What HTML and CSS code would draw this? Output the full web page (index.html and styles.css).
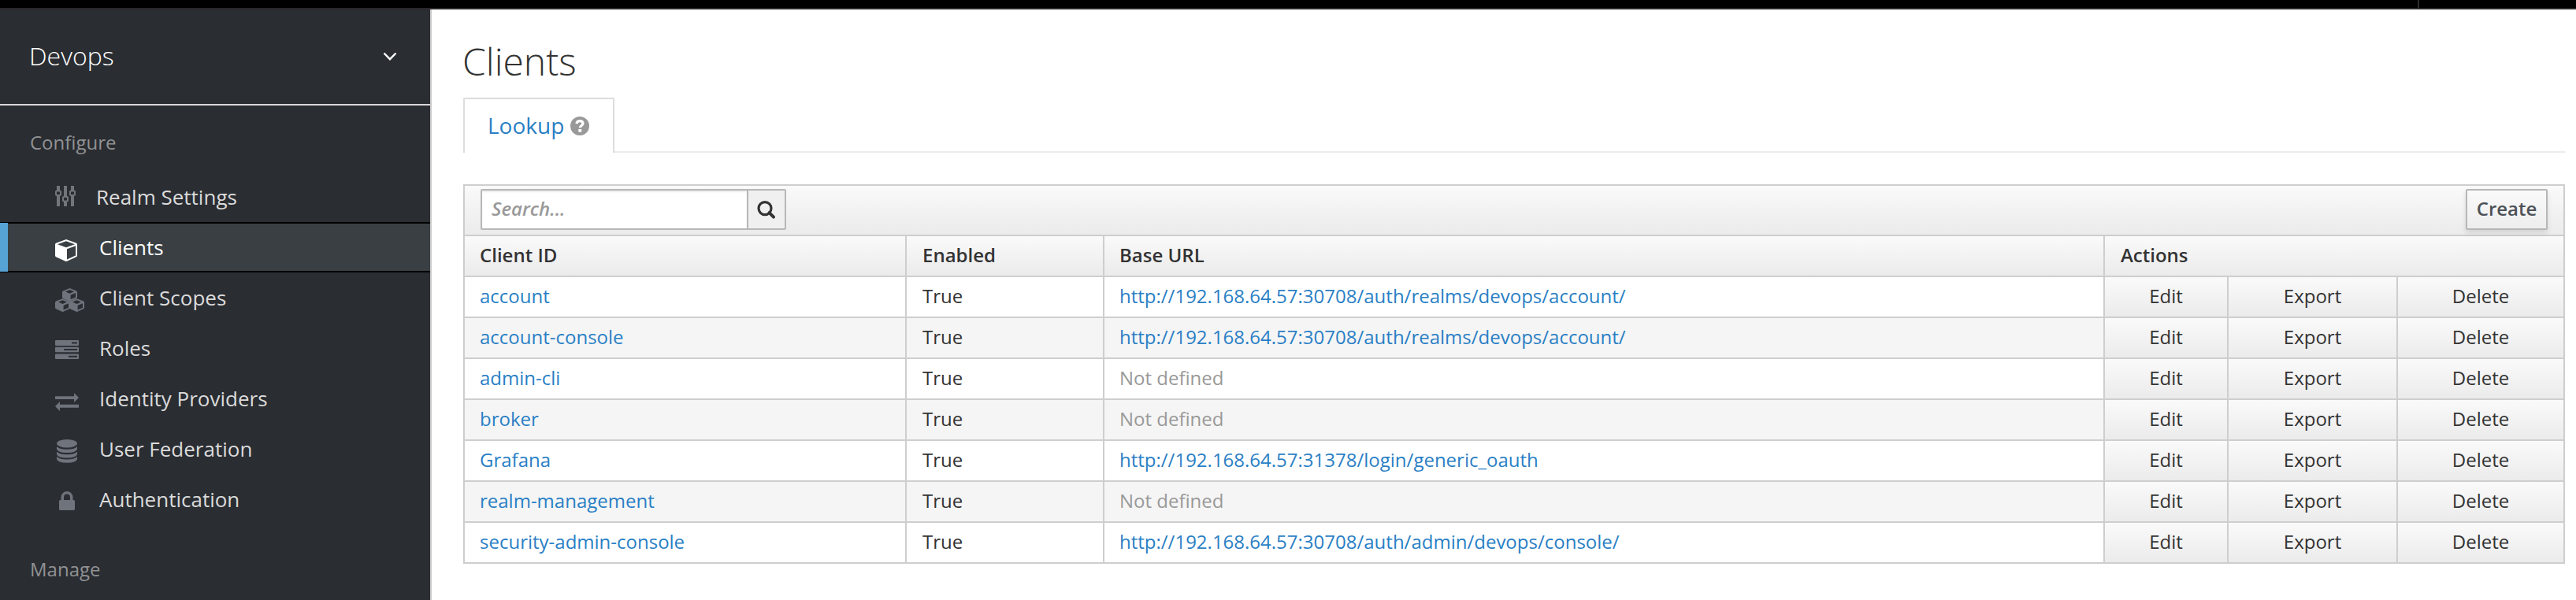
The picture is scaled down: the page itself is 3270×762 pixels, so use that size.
FILE: index.html
```
<!DOCTYPE html>
<html lang="en">
<head>
<meta charset="utf-8">
<title>Clients</title>
<link rel="stylesheet" href="styles.css">
</head>
<body>
<div class="topbar"><span class="topbar-sep"></span></div>
<div class="shell">
  <nav class="sidebar">
    <div class="realm"><span>Devops</span>
      <svg width="18" height="12" viewBox="0 0 18 12"><path d="M1.500 1.500 9 9.200l7.500-7.700" fill="none" stroke="#fff" stroke-width="2.400"/></svg>
    </div>
    <h2 class="group">Configure</h2>
    <ul class="menu">
      <li class="item first"><span class="ico"><svg width="26" height="26" viewBox="0 0 26 26"><g fill="#72767b"><path d="M2 0h4v6H2zM2 12h4v14H2zM11 0h4v14h-4zM11 20h4v6h-4zM20 0h4v6h-4zM20 12h4v14h-4z"/></g><g fill="none" stroke="#72767b" stroke-width="2"><rect x="1" y="6.500" width="6" height="5.500" rx="1"/><rect x="10" y="14" width="6" height="5.500" rx="1"/><rect x="19" y="6.500" width="6" height="5.500" rx="1"/></g></svg></span><a>Realm Settings</a></li>
      <li class="item active"><span class="ico low"><svg width="28" height="28" viewBox="0 0 28 28"><path fill="#fff" fill-rule="evenodd" d="M14 0 27 4.800Q28 5.300 28 6.500V20.500Q28 21.700 27 22.300L15 27.800Q14 28.200 13 27.800L1 22.300Q0 21.700 0 20.500V6.500Q0 5.300 1 4.800ZM14 2.200 3 6.200 14 10.300 25 6.200ZM15 25.500 26 20.500V8.300L15 12.300Z"/></svg></span><a>Clients</a></li>
      <li class="item"><span class="ico"><svg class="drop" width="37" height="30" viewBox="0 0 37 30"><defs><path id="cube" fill="#6f737b" fill-rule="evenodd" d="M9.500 0 18 3.400Q19 3.900 19 5V11.500Q19 12.600 18 13.100L10.300 16.500Q9.500 16.900 8.700 16.500L1 13.100Q0 12.600 0 11.500V5Q0 3.900 1 3.400ZM9.500 2 4 4.400 9.500 6.800 15 4.400ZM10.600 14.300 17 11.500V6L10.600 8.800Z"/></defs><use href="#cube" x="9"/><use href="#cube" y="13.200"/><use href="#cube" x="18" y="13.200"/></svg></span><a>Client Scopes</a></li>
      <li class="item"><span class="ico slight"><svg width="30" height="24" viewBox="0 0 30 24"><path fill="#6f737b" fill-rule="evenodd" d="M1 0H29Q30 0 30 1V6Q30 7 29 7H1Q0 7 0 6V1Q0 0 1 0ZM21 2.500V4.500H28V2.500ZM1 8.800H29Q30 8.800 30 9.800V14.300Q30 15.300 29 15.300H1Q0 15.300 0 14.300V9.800Q0 8.800 1 8.800ZM11 11V13H28V11ZM1 17.500H29Q30 17.500 30 18.500V23Q30 24 29 24H1Q0 24 0 23V18.500Q0 17.500 1 17.500ZM17 19.700V21.700H28V19.700Z"/></svg></span><a>Roles</a></li>
      <li class="item"><span class="ico low"><svg width="30" height="23" viewBox="0 0 30 23"><path fill="#6f737b" d="M0 4.200H24V0L30 6 24 12V8H0ZM30 14.700V18.700H6V23L0 16.900 6 11V14.700Z"/></svg></span><a>Identity Providers</a></li>
      <li class="item"><span class="ico mid"><svg class="drop" width="26" height="30" viewBox="0 0 26 30"><g fill="#6f737b"><ellipse cx="13" cy="5.200" rx="13" ry="5.200"/><path id="disk" d="M0 9.300Q4 12.800 13 12.800T26 9.300V12.300Q25 17 13 17T0 12.300Z"/><use href="#disk" y="6.400"/><use href="#disk" y="12.800"/></g></svg></span><a>User Federation</a></li>
      <li class="item"><span class="ico mid slight"><svg class="lock" width="20" height="24" viewBox="0 0 20 24"><path fill="#6f737b" fill-rule="evenodd" d="M2.500 11V7.500A7.500 7.500 0 0 1 17.500 7.500V11H18.500Q20 11 20 12.500V22.500Q20 24 18.500 24H1.500Q0 24 0 22.500V12.500Q0 11 1.500 11ZM6 11H14V7.500A4 4 0 0 0 6 7.500Z"/></svg></span><a>Authentication</a></li>
    </ul>
    <h2 class="group manage">Manage</h2>
  </nav>
  <main class="content">
    <h1>Clients</h1>
    <div class="tabs"><div class="tab"><a>Lookup</a><svg width="24" height="24" viewBox="0 0 24 24"><circle cx="12" cy="12" r="12" fill="#999"/><path d="M8 9.200C8.300 6.300 10 5.700 12 5.700c2.500 0 4 1.300 4 3.100 0 2.600-3.700 2.700-3.700 5.400" fill="none" stroke="#fff" stroke-width="3.200"/><path fill="#fff" d="M10.300 16h3.900v3.700h-3.900z"/></svg></div></div>
    <div class="toolbar">
      <div class="search"><span class="field">Search...</span><span class="search-btn"><svg width="24" height="24" viewBox="0 0 24 24"><circle cx="10" cy="9.600" r="8" fill="none" stroke="#333" stroke-width="3.200"/><path d="M15.500 15.200 21 20.700" stroke="#333" stroke-width="4" stroke-linecap="round"/></svg></span></div>
      <span class="create">Create</span>
    </div>
    <table class="grid">
      <colgroup><col class="c1"><col class="c2"><col class="c3"><col class="c4"><col class="c5"><col class="c6"></colgroup>
      <tr><th>Client ID</th><th>Enabled</th><th>Base URL</th><th colspan="3">Actions</th></tr>
      <tr><td><a>account</a></td><td>True</td><td><a>http://192.168.64.57:30708/auth/realms/devops/account/</a></td><td class="act">Edit</td><td class="act">Export</td><td class="act">Delete</td></tr>
      <tr><td><a>account-console</a></td><td>True</td><td><a>http://192.168.64.57:30708/auth/realms/devops/account/</a></td><td class="act">Edit</td><td class="act">Export</td><td class="act">Delete</td></tr>
      <tr><td><a>admin-cli</a></td><td>True</td><td class="none">Not defined</td><td class="act">Edit</td><td class="act">Export</td><td class="act">Delete</td></tr>
      <tr><td><a>broker</a></td><td>True</td><td class="none">Not defined</td><td class="act">Edit</td><td class="act">Export</td><td class="act">Delete</td></tr>
      <tr><td><a>Grafana</a></td><td>True</td><td><a>http://192.168.64.57:31378/login/generic_oauth</a></td><td class="act">Edit</td><td class="act">Export</td><td class="act">Delete</td></tr>
      <tr><td><a>realm-management</a></td><td>True</td><td class="none">Not defined</td><td class="act">Edit</td><td class="act">Export</td><td class="act">Delete</td></tr>
      <tr><td><a>security-admin-console</a></td><td>True</td><td><a>http://192.168.64.57:30708/auth/admin/devops/console/</a></td><td class="act">Edit</td><td class="act">Export</td><td class="act">Delete</td></tr>
    </table>
  </main>
</div>
</body>
</html>
```
FILE: styles.css
```
* { box-sizing: border-box; }
body { margin: 0; height: 762px; overflow: hidden; background: #fff; color: #333; font: 24px/32px "Open Sans", sans-serif; }
svg { display: block; flex: none; }
h1, h2, ul { margin: 0; padding: 0; list-style: none; }
.topbar { height: 12px; background: #000; border-bottom: 2px solid #292729; display: flex; justify-content: flex-end; }
.topbar-sep { width: 2px; height: 10px; margin-right: 199px; background: #2b2b2b; }
.shell { display: flex; height: 750px; }
.sidebar { width: 548px; flex: none; background: #2a2d32; border-right: 2px solid #ccc; }
.realm { height: 122px; border-bottom: 2px solid #d9d7db; padding: 0 42px 0 37px; display: flex; align-items: center; justify-content: space-between; font-size: 32px; color: #fff; }
.realm span { font-weight: 300; padding-bottom: 2px; }
.group { font-size: 24px; font-weight: 400; color: #919294; padding-left: 38px; line-height: 32px; margin-top: 31px; }
.menu { margin-top: 21px; }
.item { height: 64px; display: flex; align-items: center; font-size: 26px; color: #dbdbdb; padding-left: 70px; border: solid transparent; border-width: 2px 0; }
.ico { width: 56px; flex: none; }
.first .ico { width: 52px; padding-bottom: 2px; }
.drop { margin-top: 6px; }
.low { padding-top: 8px; }
.slight { padding-top: 4px; }
.mid { padding-left: 2px; }
.lock { margin-left: 3px; }
.item.active { position: relative; background: #393f43; border-color: #000; color: #fff; }
.item.active::before { content: ""; position: absolute; left: 0; top: -1px; width: 10px; height: 62px; background: #56a3d6; }
.group.manage { margin-top: 41px; }
.content { flex: 1; padding: 36px 14px 0 40px; }
h1 { font-size: 48px; font-weight: 300; line-height: 60px; text-indent: -1px; }
.tabs { margin-top: 16px; height: 70px; border-bottom: 2px solid #ececec; display: flex; }
.tab { width: 192px; height: 70px; border: 2px solid #ddd; border-bottom: 0; background: #fff; padding: 0 0 2px 29px; display: flex; align-items: center; gap: 8px; font-size: 28px; border-radius: 2px 2px 0 0; }
.tab svg { margin-top: 2px; }
a { color: #2a7fc5; }
.item a { color: inherit; }
.toolbar { margin-top: 40px; height: 64px; border: 2px solid #cecece; border-bottom: 0; background: linear-gradient(#fafafa, #ebebeb); padding: 4px 20px 0 20px; display: flex; justify-content: space-between; align-items: flex-start; }
.search { width: 388px; height: 52px; border: 2px solid #b7b7b7; border-radius: 2px; display: flex; }
.field { width: 336px; background: #fff; box-shadow: inset 0 2px 2px rgba(3,3,3,.075); padding: 7px 12px; color: #999; font-weight: 600; font-style: italic; }
.search-btn { flex: 1; background: #f0f0f0; border-left: 2px solid #b7b7b7; padding: 13px 0 0 11px; }
.create { width: 104px; height: 52px; border: 2px solid #b7b7b7; border-radius: 2px; background: linear-gradient(#fafafa, #ededed); box-shadow: 0 4px 6px rgba(3,3,3,.1); text-align: center; line-height: 46px; font-weight: 600; color: #4d5258; }
.grid { width: 2668px; table-layout: fixed; border-collapse: separate; border-spacing: 0; border: 2px solid #cecece; border-width: 2px 0 0 2px; }
.c1 { width: 561px; } .c2 { width: 251px; } .c3 { width: 1270px; } .c4 { width: 157px; } .c5 { width: 215px; } .c6 { width: 212px; }
.grid th, .grid td { height: 52px; padding: 0 20px 2px; line-height: 32px; text-align: left; border: solid #cecece; border-width: 0 2px 2px 0; white-space: nowrap; }
.grid th:first-child, .grid td:first-child, .grid th:nth-child(3), .grid td:nth-child(3) { padding-left: 19px; }
.grid th { font-weight: 600; background: linear-gradient(#fafafa, #ebebeb); background-clip: padding-box; }
.grid tr:nth-child(odd) td { background: #f5f5f5; }
.grid td.none { color: #999; }
.grid tr td.act, .grid tr:nth-child(odd) td.act { text-align: center; background: linear-gradient(#fafafa, #ebebeb); }
```
